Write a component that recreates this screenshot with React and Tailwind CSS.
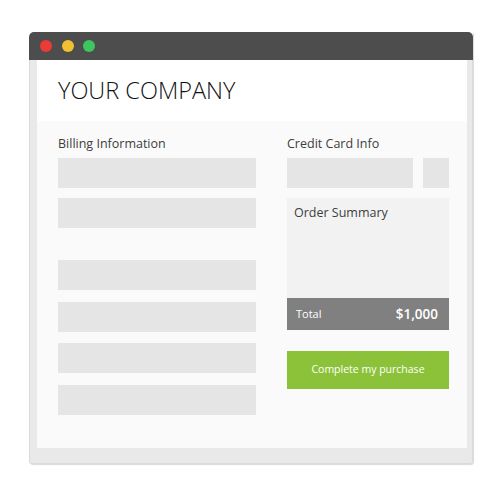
import React from "react";

const fieldClass = "h-[30px] bg-[#e5e5e5]";

function App() {
  return (
    <div className="w-[500px] h-[500px] bg-white pt-[32px] pl-[29px] font-['Open_Sans',sans-serif]">
      <div className="w-[444px] shadow-[1px_1px_1px_rgba(0,0,0,0.15)] rounded-b-[3px]">
        {/* title bar */}
        <div className="h-[28px] bg-[#4d4d4d] rounded-t-[5px] flex items-center pl-[11px] gap-[9.5px]">
          <span className="w-[12px] h-[12px] rounded-full bg-[#ec3a37]"></span>
          <span className="w-[12px] h-[12px] rounded-full bg-[#f2bf33]"></span>
          <span className="w-[12px] h-[12px] rounded-full bg-[#3fc55e]"></span>
        </div>
        {/* frame */}
        <div className="bg-[#e9e9e9] pl-[7px] pr-[5px] pb-[15px] border-l border-r border-b border-[#dadada] rounded-b-[3px]">
          <div className="bg-white">
            <div className="h-[61px] flex items-center pl-[21px] pt-[1px]">
              <h1 className="text-[23.5px] font-light text-[#111] leading-none">YOUR COMPANY</h1>
            </div>
            <div className="bg-[#fafafa] h-[327px] flex pl-[21px] pt-[14px]">
              {/* billing */}
              <div className="w-[198px] flex flex-col">
                <div className="text-[12.5px] leading-[18px] text-[#3d3d3d] h-[18px] mb-[5px]">Billing Information</div>
                <div className={fieldClass}></div>
                <div className={fieldClass + " mt-[10px]"}></div>
                <div className={fieldClass + " mt-[32px]"}></div>
                <div className={fieldClass + " mt-[12px]"}></div>
                <div className={fieldClass + " mt-[11px]"}></div>
                <div className={fieldClass + " mt-[12px]"}></div>
              </div>
              {/* credit card */}
              <div className="w-[162px] ml-[31px] flex flex-col">
                <div className="text-[12.5px] leading-[18px] text-[#3d3d3d] h-[18px] mb-[5px]">Credit Card Info</div>
                <div className="flex gap-[10px]">
                  <div className={fieldClass + " w-[126px]"}></div>
                  <div className={fieldClass + " flex-1"}></div>
                </div>
                <div className="mt-[10px] h-[100px] bg-[#f2f2f2] pl-[7px] pt-[6px]">
                  <div className="text-[12.5px] leading-[18px] text-[#3d3d3d]">Order Summary</div>
                </div>
                <div className="h-[32px] bg-[#808080] flex items-center justify-between pl-[9px] pr-[11px] text-white">
                  <span className="text-[11px]">Total</span>
                  <span className="text-[13.5px] font-semibold">$1,000</span>
                </div>
                <button className="mt-[21px] h-[38px] bg-[#8cc23a] text-white text-[10.5px] flex items-center justify-center">
                  Complete my purchase
                </button>
              </div>
            </div>
          </div>
        </div>
      </div>
    </div>
  );
}

export default App;
